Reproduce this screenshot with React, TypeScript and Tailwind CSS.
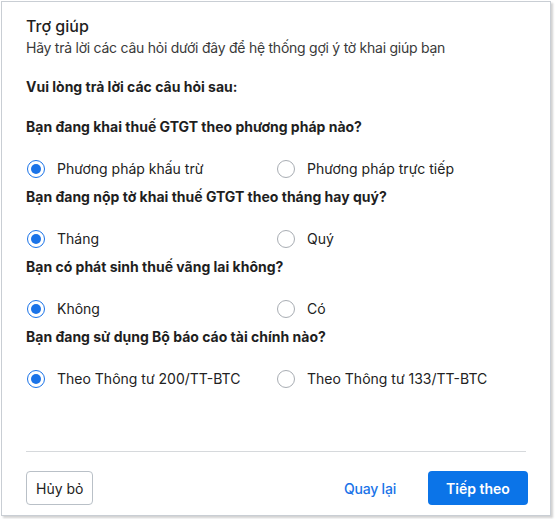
import React, { useState } from "react";

type Q = { q: string; opts: [string, string] };

const questions: Q[] = [
  { q: "Bạn đang khai thuế GTGT theo phương pháp nào?", opts: ["Phương pháp khấu trừ", "Phương pháp trực tiếp"] },
  { q: "Bạn đang nộp tờ khai thuế GTGT theo tháng hay quý?", opts: ["Tháng", "Quý"] },
  { q: "Bạn có phát sinh thuế vãng lai không?", opts: ["Không", "Có"] },
  { q: "Bạn đang sử dụng Bộ báo cáo tài chính nào?", opts: ["Theo Thông tư 200/TT-BTC", "Theo Thông tư 133/TT-BTC"] },
];

function Radio({ checked, label, onClick }: { checked: boolean; label: string; onClick: () => void }) {
  return (
    <button type="button" onClick={onClick} className="flex items-center gap-[12px] text-left">
      <span
        className={
          checked
            ? "flex h-[18px] w-[18px] items-center justify-center rounded-full border-[1.5px] border-[#1a73e8] bg-white"
            : "flex h-[18px] w-[18px] items-center justify-center rounded-full border border-[#a8adb3] bg-white"
        }
      >
        {checked && <span className="h-[10px] w-[10px] rounded-full bg-[#1a73e8]" />}
      </span>
      <span className="text-[14px] text-[#222]">{label}</span>
    </button>
  );
}

export default function App() {
  const [sel, setSel] = useState<number[]>([0, 0, 0, 0]);
  return (
    <div className="h-[519px] w-[555px] bg-white" style={{ fontFamily: "Inter, 'Noto Sans', sans-serif" }}>
      <div className="ml-[1px] mt-[1px] flex h-[515px] w-[550px] flex-col border border-[#c9ced4] bg-white shadow-[2px_2px_2px_rgba(0,0,0,0.18)]">
        <div className="flex-1 px-[24px] pt-[13px]">
          <div className="text-[16px] font-medium leading-[23px] text-[#1f1f1f]">Trợ giúp</div>
          <div className="text-[14px] leading-[20px] tracking-[-0.25px] text-[#3a3a3a]">
            Hãy trả lời các câu hỏi dưới đây để hệ thống gợi ý tờ khai giúp bạn
          </div>
          <div className="mt-[19px] text-[14px] font-bold leading-[20px] text-[#1f1f1f]">
            Vui lòng trả lời các câu hỏi sau:
          </div>
          <div className="mt-[20px] flex flex-col">
            {questions.map((item, qi) => (
              <div key={qi} className="flex flex-col">
                <div className="text-[14px] font-bold leading-[20px] text-[#1f1f1f]">{item.q}</div>
                <div className="mt-[21px] mb-[9px] grid h-[20px] grid-cols-[250px_1fr] items-center pl-[1px]">
                  {item.opts.map((o, oi) => (
                    <Radio
                      key={oi}
                      label={o}
                      checked={sel[qi] === oi}
                      onClick={() => setSel((s) => s.map((v, i) => (i === qi ? oi : v)))}
                    />
                  ))}
                </div>
              </div>
            ))}
          </div>
        </div>
        <div className="mx-[24px] border-t border-[#d6d9dc]" />
        <div className="flex items-center justify-between pl-[24px] pr-[22px] pb-[10px] pt-[19px]">
          <button className="h-[34px] rounded-[4px] border border-[#b9c0c7] px-[9px] text-[14px] text-[#222]">Hủy bỏ</button>
          <div className="flex items-center gap-[32px]">
            <button className="text-[14px] font-medium tracking-[-0.2px] text-[#1a73e8]">Quay lại</button>
            <button className="h-[34px] w-[100px] rounded-[4px] bg-[#0b74e8] text-[14px] font-semibold text-white">Tiếp theo</button>
          </div>
        </div>
      </div>
    </div>
  );
}
